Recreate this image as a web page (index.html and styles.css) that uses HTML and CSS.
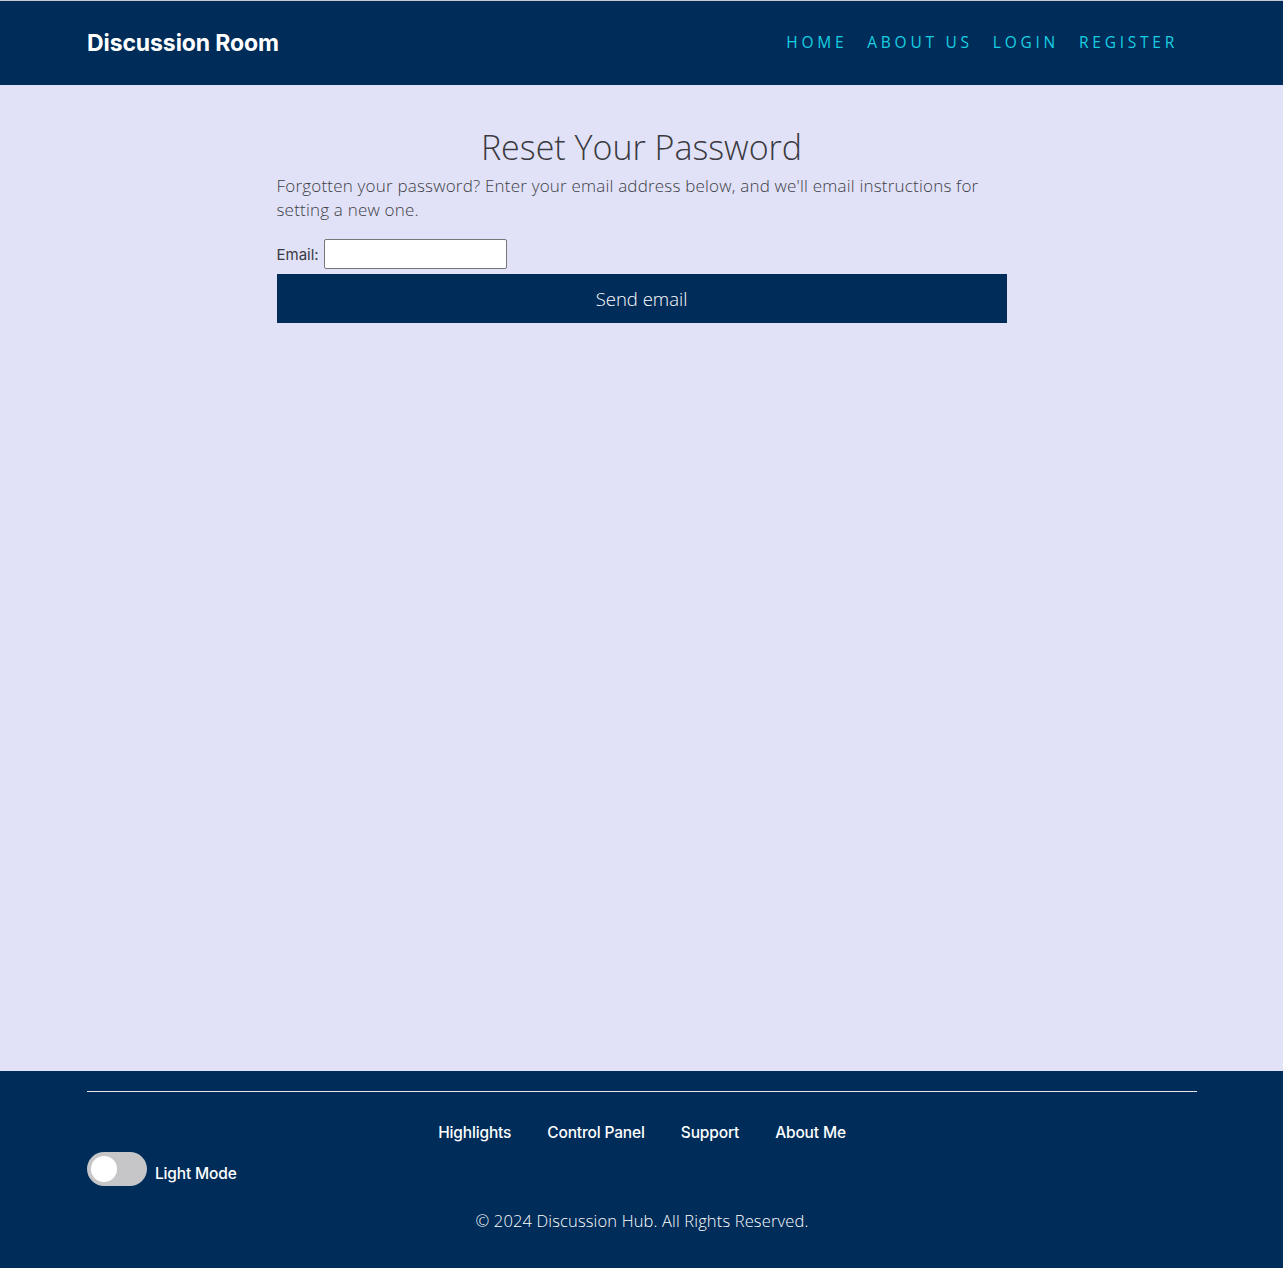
FILE: index.html
```html
<!DOCTYPE html>
<html lang="en">
<head>
<meta charset="utf-8">
<title>Reset Your Password</title>
<link rel="stylesheet" href="styles.css">
</head>
<body>
<header class="site-header">
  <div class="header-inner">
    <a class="brand" href="#">Discussion Room</a>
    <nav class="main-nav">
      <a href="#">Home</a>
      <a href="#">About Us</a>
      <a href="#">Login</a>
      <a href="#">Register</a>
    </nav>
  </div>
</header>
<main class="content">
  <h1 class="title">Reset Your Password</h1>
  <p class="intro">Forgotten your password? Enter your email address below, and we'll email instructions for setting a new one.</p>
  <form class="reset-form">
    <div class="field">
      <label for="email">Email:</label>
      <input id="email" type="email" class="email-input">
    </div>
    <button type="button" class="send-btn">Send email</button>
  </form>
</main>
<footer class="site-footer">
  <div class="footer-inner">
    <hr class="footer-rule">
    <nav class="footer-nav">
      <a href="#">Highlights</a>
      <a href="#">Control Panel</a>
      <a href="#">Support</a>
      <a href="#">About Me</a>
    </nav>
    <div class="mode-row">
      <span class="toggle"><span class="knob"></span></span>
      <span class="mode-label">Light Mode</span>
    </div>
    <p class="copyright">© 2024 Discussion Hub. All Rights Reserved.</p>
  </div>
</footer>
</body>
</html>
```
FILE: styles.css
```css
* { box-sizing: border-box; }
html, body { margin: 0; padding: 0; }
body {
  min-height: 100vh;
  display: flex;
  flex-direction: column;
  background: #e1e2f7;
  font-family: "Open Sans", "DejaVu Sans", sans-serif;
  color: #3b3b44;
}
a { text-decoration: none; }

.site-header {
  background: #002c59;
  border-top: 1px solid #c9c9d4;
  height: 85px;
}
.header-inner {
  height: 84px;
  padding: 0 105px 0 87px;
  display: flex;
  align-items: center;
  justify-content: space-between;
}
.brand {
  font-family: Inter, "Liberation Sans", sans-serif;
  font-weight: 700;
  font-size: 23px;
  letter-spacing: -0.1px;
  color: #ffffff;
  margin-top: -1px;
}
.main-nav {
  display: flex;
  gap: 20px;
  margin-top: -3px;
}
.main-nav a {
  font-family: "Open Sans", sans-serif;
  font-weight: 400;
  font-size: 15.5px;
  letter-spacing: 3.75px;
  text-transform: uppercase;
  color: #17d0e2;
}

.content {
  flex: 1;
  width: 730px;
  margin: 0 auto;
  padding-top: 42px;
}
.title {
  margin: 0;
  text-align: center;
  font-family: "Open Sans", sans-serif;
  font-weight: 300;
  font-size: 34px;
  line-height: 40px;
  color: #3a3a40;
}
.intro {
  margin: 7px 0 17px;
  font-family: "Open Sans", sans-serif;
  font-weight: 300;
  font-size: 17px;
  letter-spacing: 0.2px;
  line-height: 24px;
  color: #3e3e46;
}
.field {
  display: flex;
  align-items: center;
  gap: 5px;
}
.field label {
  font-family: Inter, "Liberation Sans", sans-serif;
  font-size: 15px;
  font-weight: 400;
  color: #3a3a40;
}
.email-input {
  width: 183px;
  height: 30px;
  border: 1px solid #767676;
  border-radius: 2px;
  background: #fff;
  margin: 0;
}
.send-btn {
  display: block;
  width: 100%;
  height: 49px;
  margin-top: 5px;
  border: none;
  background: #002c59;
  color: #fff;
  font-family: "Open Sans", sans-serif;
  font-weight: 300;
  font-size: 18.5px;
}

.site-footer {
  background: #002c59;
  height: 197px;
}
.footer-inner {
  width: 1110px;
  margin: 0 0 0 87px;
  padding-top: 20px;
}
.footer-rule {
  margin: 0;
  border: none;
  border-top: 1px solid #e6e6ee;
}
.footer-nav {
  display: flex;
  justify-content: center;
  gap: 36px;
  margin-top: 31px;
}
.footer-nav a {
  font-family: Inter, "Liberation Sans", sans-serif;
  font-weight: 500;
  font-size: 15.5px;
  letter-spacing: -0.15px;
  line-height: 20px;
  color: #ffffff;
}
.mode-row {
  display: flex;
  align-items: center;
  gap: 8px;
  margin-top: 9px;
}
.toggle {
  position: relative;
  width: 60px;
  height: 34px;
  border-radius: 17px;
  background: #c6c6c8;
}
.knob {
  position: absolute;
  left: 4px;
  top: 4px;
  width: 26px;
  height: 26px;
  border-radius: 50%;
  background: #ffffff;
}
.mode-label {
  font-family: Inter, "Liberation Sans", sans-serif;
  font-weight: 500;
  font-size: 15.5px;
  letter-spacing: -0.15px;
  color: #ffffff;
  margin-top: 8px;
}
.copyright {
  margin: 23px 0 0;
  text-align: center;
  font-family: "Open Sans", sans-serif;
  font-weight: 300;
  font-size: 16.5px;
  letter-spacing: 0.15px;
  color: #ffffff;
}
```
